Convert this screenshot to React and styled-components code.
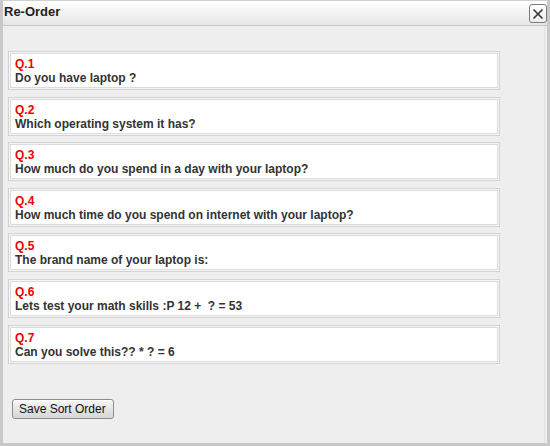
import React from "react";
import styled, { createGlobalStyle } from "styled-components";

const GlobalStyle = createGlobalStyle`
  html, body {
    margin: 0;
    padding: 0;
    background: #ffffff;
  }
  body {
    font-family: "Liberation Sans", Arial, sans-serif;
  }
`;

const questions = [
  { id: 1, text: "Do you have laptop ?" },
  { id: 2, text: "Which operating system it has?" },
  { id: 3, text: "How much do you spend in a day with your laptop?" },
  { id: 4, text: "How much time do you spend on internet with your laptop?" },
  { id: 5, text: "The brand name of your laptop is:" },
  { id: 6, text: "Lets test your math skills :P 12 +  ? = 53" },
  { id: 7, text: "Can you solve this?? * ? = 6" },
];

const DialogFrame = styled.div`
  width: 550px;
  height: 446px;
  box-sizing: border-box;
  border-left: 3px solid #c8c8c8;
  border-right: 3px solid #c8c8c8;
  border-bottom: 3px solid #c8c8c8;
  border-top: 1px solid #d0d0d0;
  background: #eeeeee;
  display: flex;
  flex-direction: column;
  overflow: hidden;
`;

const TitleBar = styled.div`
  height: 24px;
  flex-shrink: 0;
  display: flex;
  align-items: center;
  justify-content: space-between;
  padding: 0 0 0 1px;
  background: linear-gradient(#ffffff, #f6f6f6 40%, #e6e6e6);
  border-bottom: 1px solid #c6c6c6;
`;

const Title = styled.span`
  font-size: 13px;
  font-weight: bold;
  color: #222222;
  margin-top: -3px;
`;

const CloseButton = styled.button`
  width: 18px;
  height: 19px;
  padding: 0;
  margin: 1px 0 0 0;
  display: flex;
  align-items: center;
  justify-content: center;
  border: 1px solid #7a7a7a;
  border-radius: 3px;
  background: linear-gradient(#ffffff, #ececec);
  cursor: pointer;
`;

const Body = styled.div`
  flex: 1;
  display: flex;
  flex-direction: column;
  padding: 25px 0 0 5px;
  border-right: 1px solid #e2e2e2;
  margin-right: 2px;
`;

const QuestionList = styled.ul`
  list-style: none;
  margin: 0;
  padding: 0;
  width: 492px;
  display: flex;
  flex-direction: column;
  gap: 6.6px;
`;

const QuestionItem = styled.li`
  border: 1px solid #d2d2d2;
  padding: 1px;
  background: #f6f6f6;
  cursor: move;
`;

const QuestionInner = styled.div`
  border: 1px solid #dcdcdc;
  background: #ffffff;
  padding: 3px 4px 2px;
  font-size: 12px;
  line-height: 14px;
  font-weight: bold;
`;

const QuestionNumber = styled.div`
  color: #ee0000;
`;

const QuestionText = styled.div`
  color: #333333;
  white-space: pre;
`;

const Footer = styled.div`
  padding: 35px 0 0 4px;
`;

const SaveButton = styled.button`
  font-family: "Liberation Sans", Arial, sans-serif;
  font-size: 12px;
  color: #111111;
  height: 20px;
  padding: 0 7px 0 6px;
  border: 1px solid #8c8c8c;
  border-radius: 3px;
  background: linear-gradient(#f8f8f8, #e4e4e4 50%, #d8d8d8);
  box-shadow: inset 0 1px 0 #ffffff;
  cursor: pointer;
`;

const CloseIcon = () => (
  <svg width="12" height="12" viewBox="0 0 12 12">
    <path d="M1.5 1.5 L10.5 10.5 M10.5 1.5 L1.5 10.5" stroke="#333" strokeWidth="1.6" />
  </svg>
);

export default function App() {
  return (
    <>
      <GlobalStyle />
      <DialogFrame>
        <TitleBar>
          <Title>Re-Order</Title>
          <CloseButton aria-label="close">
            <CloseIcon />
          </CloseButton>
        </TitleBar>
        <Body>
          <QuestionList>
            {questions.map((q) => (
              <QuestionItem key={q.id}>
                <QuestionInner>
                  <QuestionNumber>Q.{q.id}</QuestionNumber>
                  <QuestionText>{q.text}</QuestionText>
                </QuestionInner>
              </QuestionItem>
            ))}
          </QuestionList>
          <Footer>
            <SaveButton>Save Sort Order</SaveButton>
          </Footer>
        </Body>
      </DialogFrame>
    </>
  );
}
